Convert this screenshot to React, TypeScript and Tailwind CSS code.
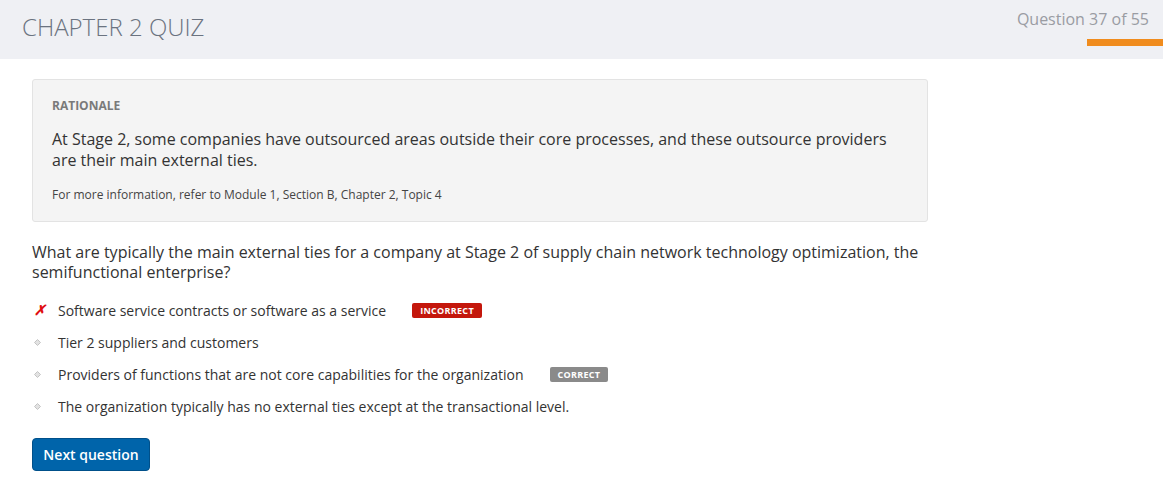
const options = [
  { text: "Software service contracts or software as a service", mark: "wrong", badge: "INCORRECT" },
  { text: "Tier 2 suppliers and customers" },
  { text: "Providers of functions that are not core capabilities for the organization", badge: "CORRECT" },
  { text: "The organization typically has no external ties except at the transactional level." },
];

function Diamond() {
  return (
    <svg width="7" height="7" viewBox="0 0 7 7" className="block">
      <path d="M3.5 0.5 L6.5 3.5 L3.5 6.5 L0.5 3.5 Z" fill="#e2e2e2" stroke="#c4c4c4" strokeWidth="1" />
    </svg>
  );
}

export default function App() {
  return (
    <div className="w-[1163px] h-[482px] bg-white text-[#333] font-['Open_Sans',sans-serif]">
      <div className="flex justify-between bg-[#eff0f4] h-[59px]">
        <div className="pl-[22px] pt-[9px] text-[24px] font-light text-[#6b7380]">CHAPTER 2 QUIZ</div>
        <div className="flex flex-col items-end pt-[7px]">
          <div className="pr-[14px] text-[16px] text-[#9a9ca3]">Question 37 of 55</div>
          <div className="mt-[8px] w-[76px] h-[7px] bg-[#f08c1e]" />
        </div>
      </div>

      <div className="pl-[32px] pt-[20px] w-[928px]">
        <div className="bg-[#f4f4f4] border border-[#e3e3e3] rounded-[3px] pl-[19px] pt-[17px] pb-[17px]">
          <div className="text-[12px] font-bold text-[#7a7a7a] leading-[18px]">RATIONALE</div>
          <p className="mt-[14px] text-[16px] leading-[21px] text-[#333] pr-[30px]">
            At Stage 2, some companies have outsourced areas outside their core processes, and these outsource providers are their main external ties.
          </p>
          <p className="mt-[15px] text-[12px] leading-[18px] text-[#444]">
            For more information, refer to Module 1, Section B, Chapter 2, Topic 4
          </p>
        </div>

        <p className="mt-[20px] text-[16px] leading-[20px] text-[#333]">
          What are typically the main external ties for a company at Stage 2 of supply chain network technology optimization, the semifunctional enterprise?
        </p>

        <div className="mt-[18px] flex flex-col gap-[12px]">
          {options.map((o) => (
            <div key={o.text} className="flex items-center h-[20px]">
              <div className="w-[26px] flex items-center pl-[2px]">
                {o.mark === "wrong" ? (
                  <span className="text-[#e01010] text-[14px] font-bold italic leading-none">✗</span>
                ) : (
                  <Diamond />
                )}
              </div>
              <span className="text-[14px] text-[#333]">{o.text}</span>
              {o.badge === "INCORRECT" && (
                <span className="ml-[26px] bg-[#c4170c] text-white text-[9px] font-bold tracking-[0.3px] rounded-[2px] px-[8px] h-[15px] leading-[15px]">INCORRECT</span>
              )}
              {o.badge === "CORRECT" && (
                <span className="ml-[26px] bg-[#8a8a8a] text-white text-[9px] font-bold tracking-[0.3px] rounded-[2px] px-[8px] h-[15px] leading-[15px]">CORRECT</span>
              )}
            </div>
          ))}
        </div>

        <button className="mt-[22px] bg-[#0064aa] text-white text-[14px] font-semibold rounded-[4px] w-[118px] h-[33px] border border-[#00508a]">
          Next question
        </button>
      </div>
    </div>
  );
}
